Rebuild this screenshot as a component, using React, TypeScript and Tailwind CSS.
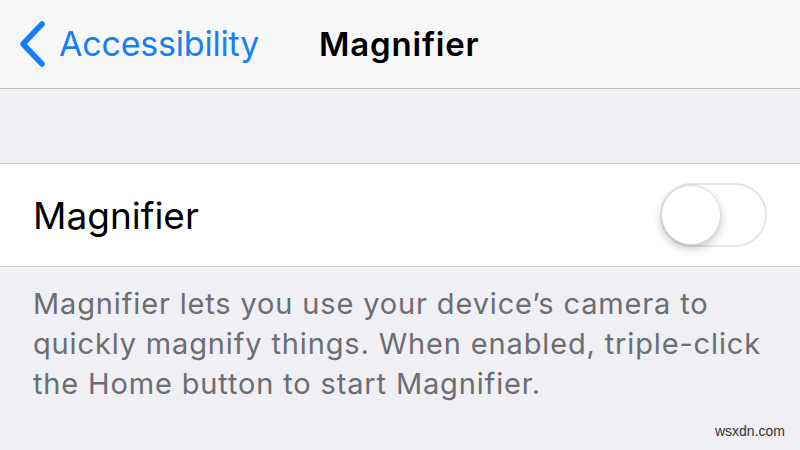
export default function App() {
  return (
    <div
      className="w-[800px] h-[450px] overflow-hidden bg-[#efeff4] relative"
      style={{ fontFamily: 'Inter, "Liberation Sans", Arial, sans-serif' }}
    >
      <header className="h-[89px] bg-[#f7f7f8] border-b border-[#b9b9be] flex items-center">
        <div className="flex items-center pl-[18px] text-[#157efb]">
          <svg width="28" height="46" viewBox="0 0 28 46" fill="none">
            <path d="M24 3 L5 23 L24 43" stroke="#157efb" strokeWidth="5.5" strokeLinecap="round" strokeLinejoin="round" />
          </svg>
          <span className="ml-[13px] text-[34px] leading-none tracking-[-0.2px]">Accessibility</span>
        </div>
        <h1 className="ml-[60px] text-[33px] font-semibold text-black leading-none tracking-[0.8px]">Magnifier</h1>
      </header>

      <div className="h-[74px]" />

      <div className="h-[104px] bg-white border-y border-[#d1d1d6] flex items-center justify-between pl-[33px] pr-[33px]">
        <span className="text-[37px] text-black leading-none">Magnifier</span>
        <div className="w-[107px] h-[64px] rounded-full border-2 border-[#e5e5ea] bg-white relative">
          <div className="absolute left-[-1px] top-[0px] w-[60px] h-[60px] rounded-full bg-white border border-[#dcdcdc] shadow-[0_4px_8px_rgba(0,0,0,0.22)]" />
        </div>
      </div>

      <p className="pl-[33px] pt-[17px] text-[29px] leading-[40px] text-[#6d6d72] tracking-[0.85px]">
        Magnifier lets you use your device’s camera to
        <br />
        quickly magnify things. When enabled, triple-click
        <br />
        the Home button to start Magnifier.
      </p>

      <span className="absolute right-[15px] bottom-[8px] text-[14px] text-[#333]" style={{ fontFamily: '"Liberation Sans", Arial, sans-serif' }}>
        wsxdn.com
      </span>
    </div>
  );
}
